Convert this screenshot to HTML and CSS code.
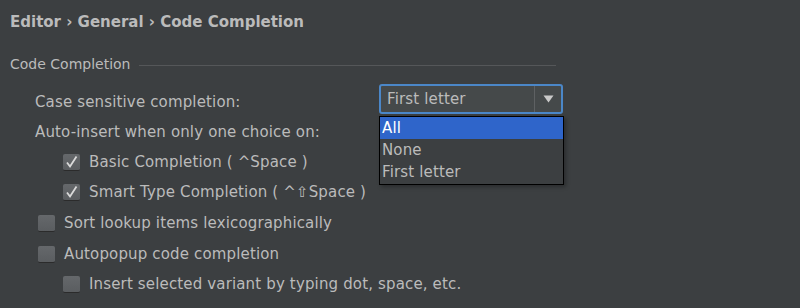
FILE: index.html
```html
<!DOCTYPE html>
<html>
<head>
<meta charset="utf-8">
<link rel="stylesheet" href="styles.css">
</head>
<body>
<div class="page">
  <h1 class="crumbs">Editor › General › Code Completion</h1>
  <div class="section">
    <span class="section-title">Code Completion</span>
    <span class="section-line"></span>
  </div>
  <div class="row level1 case-row">
    <span class="label">Case sensitive completion:</span>
    <div class="combo-wrap">
      <div class="combo">
        <span class="combo-value">First letter</span>
        <span class="combo-arrow"><svg width="11" height="8" viewBox="0 0 11 8"><path d="M0.5 0.5 H10.5 L5.5 7.5 Z" fill="#c9c9c9"/></svg></span>
      </div>
      <ul class="popup">
        <li class="selected">All</li>
        <li>None</li>
        <li>First letter</li>
      </ul>
    </div>
  </div>
  <div class="row level1"><span class="label">Auto-insert when only one choice on:</span></div>
  <div class="row level2"><span class="cb checked"><svg width="17" height="17" viewBox="0 0 17 17"><path d="M4 8.5 L7 12.5 L13.5 2.5" fill="none" stroke="#dadada" stroke-width="1.8"/></svg></span><span class="label">Basic Completion ( ^Space )</span></div>
  <div class="row level2"><span class="cb checked"><svg width="17" height="17" viewBox="0 0 17 17"><path d="M4 8.5 L7 12.5 L13.5 2.5" fill="none" stroke="#dadada" stroke-width="1.8"/></svg></span><span class="label">Smart Type Completion ( ^⇧Space )</span></div>
  <div class="row level1b"><span class="cb"></span><span class="label">Sort lookup items lexicographically</span></div>
  <div class="row level1b"><span class="cb"></span><span class="label">Autopopup code completion</span></div>
  <div class="row level2"><span class="cb"></span><span class="label">Insert selected variant by typing dot, space, etc.</span></div>
</div>
</body>
</html>
```
FILE: styles.css
```css
html, body {
  margin: 0;
  padding: 0;
  background: #3c3f41;
}
body {
  width: 800px;
  height: 308px;
  overflow: hidden;
  font-family: "DejaVu Sans", "Liberation Sans", sans-serif;
  color: #bbbbbb;
}
.page {
  padding: 12px 0 0 10px;
}
.crumbs {
  margin: 0;
  font-size: 15px;
  font-weight: bold;
  color: #bbbbbb;
  line-height: 20px;
  height: 20px;
}
.section {
  display: flex;
  align-items: center;
  margin-top: 22px;
  height: 20px;
  font-size: 14px;
}
.section-title {
  margin-right: 9px;
}
.section-line {
  width: 417px;
  height: 1px;
  background: #555759;
  margin-top: 3px;
}
.row {
  display: flex;
  align-items: center;
  height: 30px;
  font-size: 15px;
  letter-spacing: 0.15px;
  white-space: nowrap;
}
.level1 { padding-left: 25px; }
.level1b { padding-left: 28px; }
.level2 { padding-left: 53px; }
.case-row {
  margin-top: 13px;
  position: relative;
}
.row + .row.level1b {
  margin-top: 1px;
}
.cb {
  width: 17px;
  height: 17px;
  box-sizing: border-box;
  background: linear-gradient(#65686b, #5a5d60);
  border-radius: 2px;
  border-bottom: 1px solid #2b2b2b;
  margin-right: 9px;
  display: inline-flex;
}
.combo-wrap {
  position: absolute;
  left: 369px;
  top: -3px;
}
.combo {
  width: 184px;
  height: 30px;
  box-sizing: border-box;
  border: 2px solid #4b87c8;
  border-radius: 3px;
  background: #45494a;
  display: flex;
  align-items: center;
}
.combo-value {
  flex: 1;
  padding-left: 6px;
}
.combo-arrow {
  width: 26px;
  height: 26px;
  border-left: 1px solid #5e6163;
  display: flex;
  align-items: center;
  justify-content: center;
}
.popup {
  list-style: none;
  margin: 2px 0 0 0;
  padding: 0;
  width: 185px;
  box-sizing: border-box;
  border: 1px solid #000;
  background: #3c3f41;
  box-shadow: 2px 2px 4px rgba(0,0,0,0.3);
}
.popup li {
  height: 22px;
  line-height: 22px;
  padding-left: 2px;
}
.popup li:last-child {
  height: 23px;
}
.popup li.selected {
  background: #2f65ca;
  color: #ffffff;
}
```
